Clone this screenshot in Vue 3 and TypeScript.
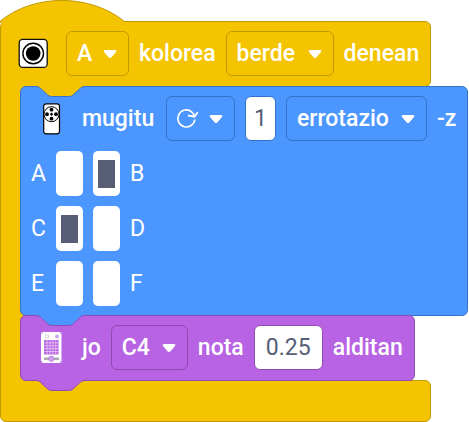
<script setup lang="ts">
import { ref } from 'vue'

interface PortSwitch {
  port: string
  on: boolean
}

const port = ref('A')
const colour = ref('berde')
const direction = ref('clockwise')
const amount = ref('1')
const unit = ref('errotazio')
const note = ref('C4')
const beats = ref('0.25')

const switchRows = ref<PortSwitch[][]>([
  [{ port: 'A', on: false }, { port: 'B', on: true }],
  [{ port: 'C', on: true }, { port: 'D', on: false }],
  [{ port: 'E', on: false }, { port: 'F', on: false }],
])
</script>

<template>
  <main class="workspace">
    <section class="event">
      <svg class="hat" width="130" height="23" viewBox="0 0 130 23" aria-hidden="true">
        <path class="hat-fill" d="M0.5 23V21C34-6.500 90-6.500 124.500 21.500H130V23Z" />
        <path class="hat-line" d="M0.500 23V21C34-6.500 90-6.500 124.500 21.500H130" />
      </svg>
      <header class="block event-head row">
        <svg class="icon" width="30" height="32" viewBox="0 0 30 32" aria-hidden="true">
          <rect x="1.200" y="1.400" width="28" height="28" rx="3.500" fill="#fff" stroke="#111" stroke-width="1.300" />
          <circle cx="15.200" cy="15.500" r="10.300" fill="#fff" stroke="#000" stroke-width="1.400" />
          <circle cx="15.200" cy="15.500" r="7.300" fill="#000" />
        </svg>
        <span class="drop drop-port">
          <select v-model="port" aria-label="A"><option>A</option></select>
          <svg class="caret" viewBox="0 0 14 10" aria-hidden="true"><path d="M2 1H12Q14 1 13 3L8.500 8.200Q7 9.800 5.500 8.200L1 3Q0 1 2 1Z" /></svg>
        </span>
        <span>kolorea</span>
        <span class="drop drop-colour">
          <select v-model="colour" aria-label="kolorea"><option>berde</option></select>
          <svg class="caret" viewBox="0 0 14 10" aria-hidden="true"><path d="M2 1H12Q14 1 13 3L8.500 8.200Q7 9.800 5.500 8.200L1 3Q0 1 2 1Z" /></svg>
        </span>
        <span>denean</span>
      </header>

      <div class="statements">
        <article class="block motion">
          <svg class="notch" width="49" height="12" viewBox="0 0 49 12" aria-hidden="true">
            <path class="from-event" d="M0-1V0.500C3 0.500 4 2 5.400 3.200L10.800 8.200C12.200 9.600 13.500 10.500 16.200 10.500H32.500C35.200 10.500 36.500 9.600 37.900 8.200L43.300 3.200C44.700 2 46 0.500 49 0.500V-1Z" />
            <path class="notch-line" d="M0 0.500C3 0.500 4 2 5.400 3.200L10.800 8.200C12.200 9.600 13.500 10.500 16.200 10.500H32.500C35.200 10.500 36.500 9.600 37.900 8.200L43.300 3.200C44.700 2 46 0.500 49 0.500" />
          </svg>
          <div class="row">
            <svg class="icon" width="30" height="32" viewBox="0 0 30 32" aria-hidden="true">
              <rect x="5.700" y="0.800" width="15.800" height="30" rx="2.500" fill="#fff" stroke="#000" stroke-width="1.200" />
              <circle cx="13.500" cy="11.200" r="7.500" fill="#fff" stroke="#000" />
              <circle cx="13.500" cy="6.700" r="1.900" />
              <circle cx="13.500" cy="15.700" r="1.900" />
              <circle cx="9" cy="11.200" r="1.900" />
              <circle cx="18" cy="11.200" r="1.900" />
              <path d="M12 11.200H15M13.500 9.700V12.700" stroke="#000" stroke-width="1.200" />
            </svg>
            <span class="word-mugitu">mugitu</span>
            <span class="drop drop-direction">
              <select v-model="direction" aria-label="mugitu"><option value="clockwise"></option></select>
              <svg class="turn" viewBox="0 0 24 22" aria-hidden="true">
                <path d="M18.800 12.500A8.500 8.500 0 1 1 14.800 4.200Q17.600 5.800 18.300 9.400" fill="none" stroke="#fff" stroke-width="1.600" />
                <path d="M21.700 5.200L18.500 9.600L12 8.500" fill="none" stroke="#fff" stroke-width="1.900" />
              </svg>
              <svg class="caret" viewBox="0 0 14 10" aria-hidden="true"><path d="M2 1H12Q14 1 13 3L8.500 8.200Q7 9.800 5.500 8.200L1 3Q0 1 2 1Z" /></svg>
            </span>
            <input v-model="amount" class="value value-amount" type="text" aria-label="errotazio">
            <span class="drop drop-unit">
              <select v-model="unit" aria-label="errotazio"><option>errotazio</option></select>
              <svg class="caret" viewBox="0 0 14 10" aria-hidden="true"><path d="M2 1H12Q14 1 13 3L8.500 8.200Q7 9.800 5.500 8.200L1 3Q0 1 2 1Z" /></svg>
            </span>
            <span>-z</span>
          </div>
          <div v-for="(pair, i) in switchRows" :key="i" class="row ports">
            <label :for="`port-${pair[0].port}`">{{ pair[0].port }}</label>
            <input
              v-for="item in pair"
              :id="`port-${item.port}`"
              :key="item.port"
              v-model="item.on"
              class="switch"
              type="checkbox"
            >
            <label :for="`port-${pair[1].port}`">{{ pair[1].port }}</label>
          </div>
        </article>

        <article class="block music">
          <svg class="notch" width="49" height="12" viewBox="0 0 49 12" aria-hidden="true">
            <path class="from-motion" d="M0-1V0.500C3 0.500 4 2 5.400 3.200L10.800 8.200C12.200 9.600 13.500 10.500 16.200 10.500H32.500C35.200 10.500 36.500 9.600 37.900 8.200L43.300 3.200C44.700 2 46 0.500 49 0.500V-1Z" />
            <path class="notch-line" d="M0 0.500C3 0.500 4 2 5.400 3.200L10.800 8.200C12.200 9.600 13.500 10.500 16.200 10.500H32.500C35.200 10.500 36.500 9.600 37.900 8.200L43.300 3.200C44.700 2 46 0.500 49 0.500" />
          </svg>
          <div class="row">
            <svg class="icon" width="30" height="32" viewBox="0 0 30 32" aria-hidden="true">
              <rect x="3" y="0" width="20.500" height="31" rx="1.500" fill="#fff" />
              <path d="M3 1H4.500M22 1H23.500M3 30H4.500M22 30H23.500" stroke="#c9a5df" stroke-width="2" />
              <rect x="7.500" y="3" width="3" height="3" fill="#fff" stroke="#d8d8d8" />
              <circle cx="19" cy="4.500" r="2" fill="#d3a8ea" />
              <rect x="6" y="8" width="14.500" height="14.500" fill="#b763e3" />
              <path d="M9.100 8V22.500M12 8V22.500M14.900 8V22.500M17.800 8V22.500M6 10.900H20.500M6 13.800H20.500M6 16.700H20.500M6 19.600H20.500" stroke="#ecd6f8" stroke-width="0.700" />
              <path d="M7 26.800H20" stroke="#b0a6b6" stroke-width="2.600" stroke-linecap="round" />
              <circle cx="13.300" cy="26.800" r="2.700" fill="#d09bef" stroke="#b67bd2" stroke-width="0.700" />
            </svg>
            <span>jo</span>
            <span class="drop drop-note">
              <select v-model="note" aria-label="nota"><option>C4</option></select>
              <svg class="caret" viewBox="0 0 14 10" aria-hidden="true"><path d="M2 1H12Q14 1 13 3L8.500 8.200Q7 9.800 5.500 8.200L1 3Q0 1 2 1Z" /></svg>
            </span>
            <span>nota</span>
            <input v-model="beats" class="value value-beats" type="text" aria-label="alditan">
            <span>alditan</span>
          </div>
          <svg class="notch notch-out" width="49" height="12" viewBox="0 0 49 12" aria-hidden="true">
            <path class="from-music" d="M0-1V0.500C3 0.500 4 2 5.400 3.200L10.800 8.200C12.200 9.600 13.500 10.500 16.200 10.500H32.500C35.200 10.500 36.500 9.600 37.900 8.200L43.300 3.200C44.700 2 46 0.500 49 0.500V-1Z" />
            <path class="notch-line" d="M0 0.500C3 0.500 4 2 5.400 3.200L10.800 8.200C12.200 9.600 13.500 10.500 16.200 10.500H32.500C35.200 10.500 36.500 9.600 37.900 8.200L43.300 3.200C44.700 2 46 0.500 49 0.500" />
          </svg>
        </article>
      </div>

      <footer class="block event-foot"></footer>
    </section>
  </main>
</template>

<style>
body {
  background: #fff;
  overflow: hidden;
}
</style>

<style scoped>
.workspace {
  --event: #f5c400;
  --event-line: #c09a00;
  --motion: #4c97ff;
  --motion-line: #3373cc;
  --music: #b763e3;
  --music-line: #8e4bb3;
  --ink: #575e75;
  color: #fff;
  font: 500 23px/28px Roboto, "Liberation Sans", sans-serif;
}

.event {
  --fill: var(--event);
  --line: var(--event-line);
  display: flex;
  flex-direction: column;
  width: max-content;
}

.hat {
  display: block;
  position: relative;
  z-index: 1;
  margin-bottom: -2px;
}

.hat-fill {
  fill: var(--fill);
}

.hat-line {
  fill: none;
  stroke: var(--line);
}

.block {
  box-sizing: border-box;
  background: var(--fill);
  border: 1px solid var(--line);
  border-radius: 6px;
}

.row {
  display: flex;
  align-items: center;
  gap: 10px;
  white-space: nowrap;
}

.event-head {
  padding: 9px 11px 10px 17px;
}

.event-foot {
  height: 42px;
  margin-top: -1px;
}

.statements {
  position: relative;
  z-index: 2;
  width: 0;
  margin-top: -1px;
  padding-left: 20px;
}

.statements::before {
  content: "";
  position: absolute;
  left: 0;
  top: -7px;
  bottom: -7px;
  width: 27px;
  background: var(--event);
  border-left: 1px solid var(--event-line);
}

.motion,
.music {
  position: relative;
  display: flex;
  flex-direction: column;
  gap: 10px;
  width: max-content;
  padding: 9px 11px 9px 17px;
}

.motion {
  --fill: var(--motion);
  --line: var(--motion-line);
}

.music {
  --fill: var(--music);
  --line: var(--music-line);
  margin-top: -1px;
  padding-bottom: 10px;
}

.notch {
  position: absolute;
  left: 15px;
  top: -1px;
  overflow: visible;
}

.notch-out {
  top: auto;
  bottom: -12px;
}

.notch-line {
  fill: none;
  stroke: var(--line);
}

.from-event {
  fill: var(--event);
}

.from-motion {
  fill: var(--motion);
}

.from-music {
  fill: var(--music);
}

.icon {
  flex: none;
  margin-right: 8px;
}

.motion .icon,
.music .icon {
  margin-right: 4px;
}

.drop {
  position: relative;
  display: block;
}

.drop select {
  appearance: none;
  box-sizing: border-box;
  display: block;
  width: 100%;
  height: 45px;
  margin: 0;
  padding: 0 10px;
  color: inherit;
  font: inherit;
  background: transparent;
  border: 1px solid var(--line);
  border-radius: 6px;
}

.drop-port {
  width: 63px;
}

.drop-colour {
  width: 108px;
}

.drop-direction {
  width: 69px;
}

.drop-unit {
  width: 141px;
}

.drop-note {
  width: 77px;
}

.word-mugitu {
  min-width: 74px;
}

.caret {
  position: absolute;
  right: 12px;
  top: 18px;
  width: 14px;
  height: 10px;
  fill: #fff;
  pointer-events: none;
}

.turn {
  position: absolute;
  left: 10px;
  top: 11px;
  width: 24px;
  height: 22px;
  pointer-events: none;
}

.value {
  box-sizing: border-box;
  height: 45px;
  margin: 0;
  padding: 0;
  color: var(--ink);
  font: inherit;
  font-weight: 400;
  text-align: center;
  background: #fff;
  border: 1px solid var(--line);
  border-radius: 6px;
}

.value-amount {
  width: 31px;
}

.value-beats {
  width: 69px;
}

.ports {
  margin-left: -7px;
  font-weight: 400;
}

.ports label {
  min-width: 15px;
}

.switch {
  appearance: none;
  box-sizing: border-box;
  width: 27px;
  height: 45px;
  margin: 0;
  background: #fff;
  border-radius: 5px;
}

.switch:checked {
  padding: 9px 5px 8px;
  background: linear-gradient(var(--ink), var(--ink)) content-box, #fff;
}
</style>
